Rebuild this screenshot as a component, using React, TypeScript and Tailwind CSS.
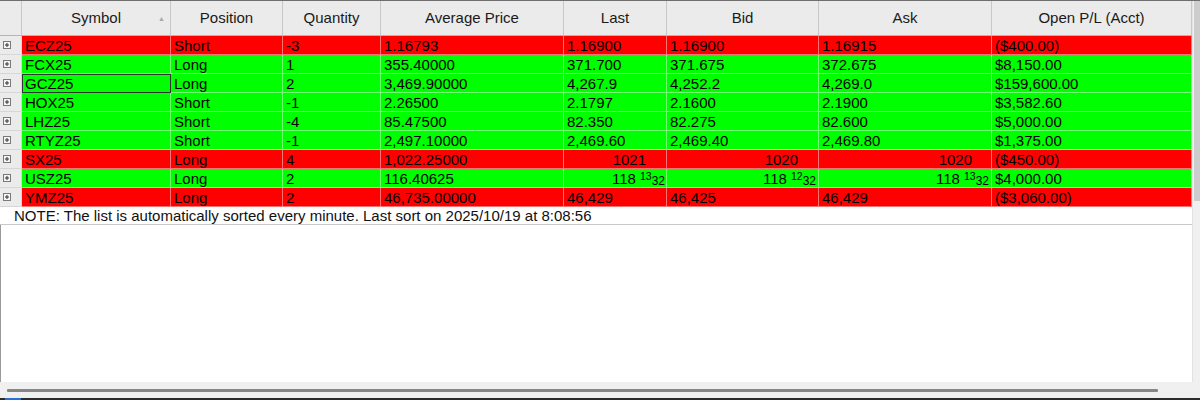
import React from 'react';

type Row = {
  sym: string;
  pos: string;
  qty: string;
  avg: string;
  last: React.ReactNode;
  bid: React.ReactNode;
  ask: React.ReactNode;
  pl: string;
  up: boolean;
  focus?: boolean;
  right?: boolean;
};

const Frac = ({ whole, num, den }: { whole: string; num: string; den: string }) => (
  <span className="inline-flex items-start">
    <span>{whole}</span>
    <span className="ml-[4px] text-[10.5px] leading-[10px] mt-[2px]">{num}</span>
    <span className="text-[12px] leading-[11px] mt-[7px]">{den}</span>
  </span>
);

const rows: Row[] = [
  { sym: 'ECZ25', pos: 'Short', qty: '-3', avg: '1.16793', last: '1.16900', bid: '1.16900', ask: '1.16915', pl: '($400.00)', up: false },
  { sym: 'FCX25', pos: 'Long', qty: '1', avg: '355.40000', last: '371.700', bid: '371.675', ask: '372.675', pl: '$8,150.00', up: true },
  { sym: 'GCZ25', pos: 'Long', qty: '2', avg: '3,469.90000', last: '4,267.9', bid: '4,252.2', ask: '4,269.0', pl: '$159,600.00', up: true, focus: true },
  { sym: 'HOX25', pos: 'Short', qty: '-1', avg: '2.26500', last: '2.1797', bid: '2.1600', ask: '2.1900', pl: '$3,582.60', up: true },
  { sym: 'LHZ25', pos: 'Short', qty: '-4', avg: '85.47500', last: '82.350', bid: '82.275', ask: '82.600', pl: '$5,000.00', up: true },
  { sym: 'RTYZ25', pos: 'Short', qty: '-1', avg: '2,497.10000', last: '2,469.60', bid: '2,469.40', ask: '2,469.80', pl: '$1,375.00', up: true },
  { sym: 'SX25', pos: 'Long', qty: '4', avg: '1,022.25000', last: '1021', bid: '1020', ask: '1020', pl: '($450.00)', up: false, right: true },
  {
    sym: 'USZ25', pos: 'Long', qty: '2', avg: '116.40625',
    last: <Frac whole="118" num="13" den="32" />,
    bid: <Frac whole="118" num="12" den="32" />,
    ask: <Frac whole="118" num="13" den="32" />,
    pl: '$4,000.00', up: true, right: true,
  },
  { sym: 'YMZ25', pos: 'Long', qty: '2', avg: '46,735.00000', last: '46,429', bid: '46,425', ask: '46,429', pl: '($3,060.00)', up: false },
];

const cols = 'grid grid-cols-[22px_149px_112px_98px_183px_103px_152px_173px_200px]';

const PlusBox = () => (
  <svg width="8" height="8" viewBox="0 0 8 8" className="block">
    <rect x="0.5" y="0.5" width="7" height="7" fill="#f4f4f4" stroke="#7a7a7a" />
    <path d="M2 4h4M4 2v4" stroke="#333" strokeWidth="1" />
  </svg>
);

export default function App() {
  const headers = ['Symbol', 'Position', 'Quantity', 'Average Price', 'Last', 'Bid', 'Ask', 'Open P/L (Acct)'];

  return (
    <div
      className="w-[1200px] h-[400px] flex flex-col bg-white text-black overflow-hidden"
      style={{ fontFamily: '"Liberation Sans", Arial, sans-serif' }}
    >
      <div className="h-px bg-[#6e6e6e]" />
      <div className="flex flex-1 min-h-0">
        <div className="flex-1 flex flex-col min-w-0">
          {/* header */}
          <div className={`${cols} h-[35px] bg-[#ebebeb] border-b border-[#b4b4b4] text-[15px] text-[#1a1a1a]`}>
            <div className="border-r border-[#c8c8c8]" />
            {headers.map((h, i) => (
              <div key={h} className="relative flex items-center justify-center border-r border-[#c8c8c8]">
                {h}
                {i === 0 && (
                  <span className="absolute right-[5px] top-[13px] text-[7px] text-[#a8a8a8]">▲</span>
                )}
              </div>
            ))}
          </div>

          {/* rows */}
          {rows.map((r) => {
            const bg = r.up ? 'bg-[#00ff00]' : 'bg-[#ff0000]';
            const cell = 'h-[19px] border-b border-r border-white/45 leading-[19px] whitespace-nowrap overflow-hidden';
            const left = `${cell} pl-[3px]`;
            const rightCell = `${cell} text-right`;
            return (
              <div key={r.sym} className={`${cols} text-[15px]`}>
                <div className="h-[19px] bg-[#ebebeb] border-b border-r border-[#d6d6d6] flex items-center pl-[3px]">
                  <PlusBox />
                </div>
                <div className={`${left} ${bg} ${r.focus ? 'outline outline-1 -outline-offset-1 outline-[#333]' : ''}`}>{r.sym}</div>
                <div className={`${left} ${bg}`}>{r.pos}</div>
                <div className={`${left} ${bg}`}>{r.qty}</div>
                <div className={`${left} ${bg}`}>{r.avg}</div>
                {r.right ? (
                  <>
                    <div className={`${rightCell} ${bg} ${typeof r.last === 'string' ? 'pr-[20px]' : 'pr-[1px]'}`}>{r.last}</div>
                    <div className={`${rightCell} ${bg} ${typeof r.bid === 'string' ? 'pr-[20px]' : 'pr-[2px]'}`}>{r.bid}</div>
                    <div className={`${rightCell} ${bg} ${typeof r.ask === 'string' ? 'pr-[19px]' : 'pr-[2px]'}`}>{r.ask}</div>
                  </>
                ) : (
                  <>
                    <div className={`${left} ${bg}`}>{r.last}</div>
                    <div className={`${left} ${bg}`}>{r.bid}</div>
                    <div className={`${left} ${bg}`}>{r.ask}</div>
                  </>
                )}
                <div className={`${left} ${bg}`}>{r.pl}</div>
              </div>
            );
          })}

          {/* note */}
          <div className="h-[18px] border-b border-[#c8c8c8] pl-[14px] text-[15px] leading-[17px] text-[#111]">
            NOTE: The list is automatically sorted every minute. Last sort on 2025/10/19 at 8:08:56
          </div>
          <div className="flex-1 border-l border-[#9a9a9a]" />
        </div>

        {/* vertical scrollbar */}
        <div className="w-[8px] bg-[#f0f0f0] border-l border-[#e2e2e2] flex flex-col">
          <div className="h-[200px] ml-[1px] bg-[#cdcdcd]" />
        </div>
      </div>

      {/* horizontal scrollbar */}
      <div className="h-[16px] bg-[#f0f0f0] flex items-center pl-[7px] pr-[42px]">
        <div className="h-[3px] w-full bg-[#868686] rounded-[1px]" />
      </div>
      <div className="h-[2px] bg-[#2b2b2b] flex">
        <div className="ml-[5px] w-[16px] bg-[#2a6fd0]" />
      </div>
    </div>
  );
}
